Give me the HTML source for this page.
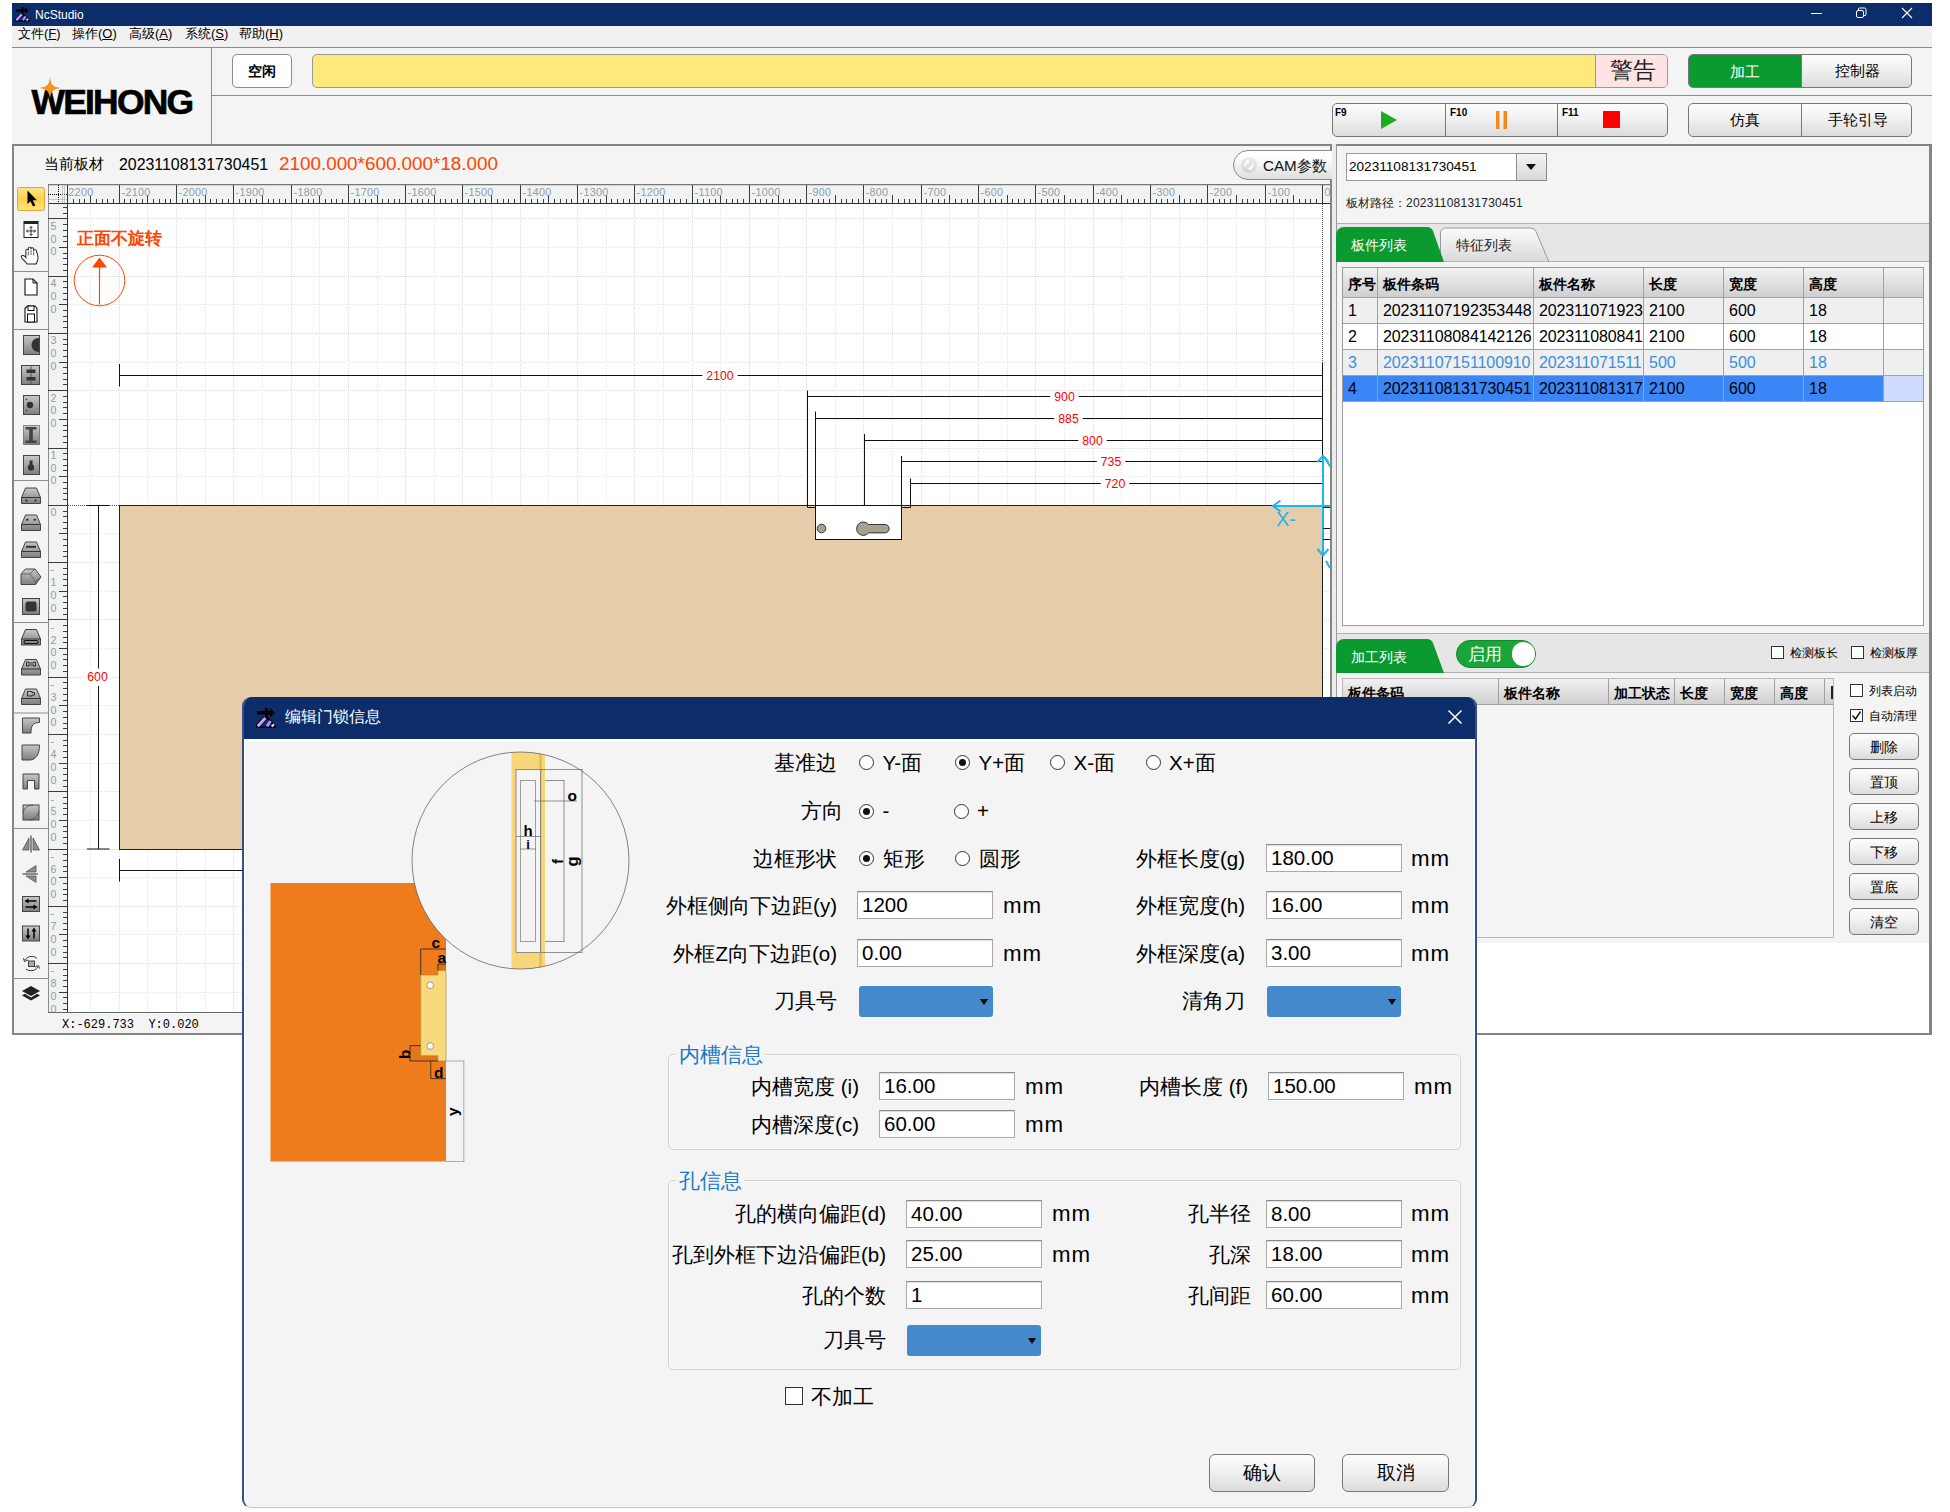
<!DOCTYPE html>
<html><head><meta charset="utf-8"><title>NcStudio</title>
<style>
*{box-sizing:border-box;margin:0;padding:0}
html,body{width:1950px;height:1512px;background:#fff;overflow:hidden}
body{font-family:"Liberation Sans",sans-serif;color:#000;position:relative;font-size:13px}
.a{position:absolute}
.t{position:absolute;white-space:nowrap;line-height:1}
.btn{position:absolute;border:1px solid #787878;border-radius:5px;background:linear-gradient(#fdfdfd,#f1f1f1 45%,#dcdcdc);text-align:center;white-space:nowrap}
.inp{position:absolute;background:#fff;border:1px solid #a9a9a9;border-top-color:#8a8a8a;box-shadow:inset 0 1px 1px #ddd;font-size:20.5px;line-height:26px;padding-left:4px;white-space:nowrap;height:28px;width:136px}
.lbl{position:absolute;font-size:20.5px;line-height:28px;height:28px;white-space:nowrap;text-align:right}
.mm{position:absolute;font-size:22.3px;line-height:27px;height:28px;white-space:nowrap;letter-spacing:1px}
.rad{position:absolute;width:15px;height:15px;border:1px solid #333;border-radius:50%;background:#fff}
.rad.on::after{content:"";position:absolute;left:3px;top:3px;width:7px;height:7px;border-radius:50%;background:#111}
.cmb{position:absolute;background:#4489cb;border-radius:3px;height:31px;width:134px}
.cmb::after{content:"";position:absolute;right:5px;top:13px;border:4.5px solid transparent;border-top:6px solid #000;border-bottom:none}
.cb{position:absolute;width:13px;height:13px;border:1px solid #333;background:#fff}
.th{position:absolute;top:0;height:100%;border-right:1px solid #a0a0a0;font-weight:bold;font-size:14px;line-height:32px;padding-left:5px;white-space:nowrap;overflow:hidden}
.td{position:absolute;top:0;height:100%;border-right:1px solid #a0a0a0;font-size:16px;line-height:26px;padding-left:5px;white-space:nowrap;overflow:hidden}
.row{position:absolute;left:0;width:580px;height:26px;border-bottom:1px solid #a0a0a0}
</style></head><body>

<div class="a" style="left:12px;top:3px;width:1920px;height:23px;background:#0c2d69"></div>
<svg class="a" style="left:15px;top:7px" width="14.5" height="14.5" viewBox="0 0 20 20"><path d="M1 3H15V6.5H1zM14 0.300L18.800 4.800 14 9.200z" fill="#000"/><rect x="8.800" y="0" width="3" height="9" fill="#000"/><path d="M10 8.5L19.5 19" stroke="#000" stroke-width="2.200"/><path d="M0 19.200H20" stroke="#000" stroke-width="1.600"/><path d="M0.800 18.800L9 10" stroke="#000" stroke-width="4.400"/><path d="M1.800 18.200L9.300 10" stroke="#c9a0ff" stroke-width="3"/><path d="M11 18.300L14.5 13" stroke="#b78cff" stroke-width="2.800"/><path d="M15.800 18.5L18 16.300" stroke="#e9d5ff" stroke-width="2.200"/></svg>
<div class="t" style="left:35px;top:9px;font-size:12px;color:#fff">NcStudio</div>
<svg class="a" style="left:1800px;top:3px" width="130" height="23" viewBox="0 0 130 23"><path d="M11 10.5h11" stroke="#fff" stroke-width="1"/><rect x="56.5" y="7.5" width="7" height="7" rx="1.5" fill="none" stroke="#fff"/><path d="M58.5 7.5v-1.5a1 1 0 0 1 1-1h5a1.5 1.5 0 0 1 1.5 1.5v5a1 1 0 0 1-1 1h-1.5" fill="none" stroke="#fff"/><path d="M102 5l10 10M112 5l-10 10" stroke="#fff" stroke-width="1.1"/></svg>
<div class="a" style="left:12px;top:26px;width:1920px;height:21px;background:#f1f1f1"></div>
<div class="t" style="left:18px;top:27px;font-size:13px">文件(<u>F</u>)</div>
<div class="t" style="left:72px;top:27px;font-size:13px">操作(<u>O</u>)</div>
<div class="t" style="left:129px;top:27px;font-size:13px">高级(<u>A</u>)</div>
<div class="t" style="left:185px;top:27px;font-size:13px">系统(<u>S</u>)</div>
<div class="t" style="left:239px;top:27px;font-size:13px">帮助(<u>H</u>)</div>
<div class="a" style="left:12px;top:47px;width:1920px;height:98px;background:#f4f4f4;border-top:1px solid #8c8c8c"></div>
<div class="a" style="left:211px;top:48px;width:1px;height:96px;background:#8c8c8c"></div>
<div class="a" style="left:212px;top:95px;width:1720px;height:1px;background:#8c8c8c"></div>
<div class="t" style="left:31.5px;top:84.5px;font-size:35.4px;font-weight:bold;letter-spacing:-1.75px;color:#000;-webkit-text-stroke:0.7px #000">WEIHONG</div>
<svg class="a" style="left:38.3px;top:76px" width="24" height="24" viewBox="-12 -12 24 24"><path d="M0-11C1-3 3-1 11 0 3 1 1 3 0 11-1 3-3 1-11 0-3-1-1-3 0-11z" fill="#f7941d"/></svg>
<div class="a" style="left:232px;top:54px;width:60px;height:34px;background:#fff;border:1px solid #8c8c8c;border-radius:5px;text-align:center;line-height:32px;font-size:14px;font-weight:bold">空闲</div>
<div class="a" style="left:312px;top:54px;width:1356px;height:34px;background:#ffe87c;border:1px solid #9a9a9a;border-radius:5px;overflow:hidden"><div class="a" style="left:1282px;top:0;width:74px;height:32px;background:#fde3e3;border-left:1px solid #9a9a9a;text-align:center;font-size:23px;line-height:31px;color:#222">警告</div></div>
<div class="btn" style="left:1688px;top:54px;width:224px;height:34px;overflow:hidden">
<div class="a" style="left:0.0px;top:-1px;width:112.0px;height:34px;background:#0b9a2f;color:#fff;font-size:15px;line-height:35px">加工</div>
<div class="a" style="left:112.0px;top:-1px;width:112.0px;height:34px;border-left:1px solid #787878;font-size:15px;line-height:33px">控制器</div>
</div>
<div class="btn" style="left:1688px;top:103px;width:224px;height:34px;overflow:hidden">
<div class="a" style="left:0.0px;top:-1px;width:112.0px;height:34px;font-size:15px;line-height:34px">仿真</div>
<div class="a" style="left:112.0px;top:-1px;width:112.0px;height:34px;border-left:1px solid #787878;font-size:15px;line-height:33px">手轮引导</div>
</div>
<div class="btn" style="left:1332px;top:103px;width:336px;height:34px;overflow:hidden">
<div class="a" style="left:0.0px;top:-1px;width:112.0px;height:34px;"><span class="t" style="left:2px;top:5px;font-size:10px;font-weight:bold">F9</span><svg class="a" style="left:47px;top:8px" width="18" height="18"><path d="M1 0L17 9 1 18z" fill="#1cad1c"/></svg></div>
<div class="a" style="left:112.0px;top:-1px;width:112.0px;height:34px;border-left:1px solid #787878;"><span class="t" style="left:4px;top:5px;font-size:10px;font-weight:bold">F10</span><svg class="a" style="left:49px;top:8px" width="14" height="18"><path d="M1 0h3.5v18H1zM8.5 0H12v18H8.5z" fill="#f08a1c"/></svg></div>
<div class="a" style="left:224.0px;top:-1px;width:112.0px;height:34px;border-left:1px solid #787878;"><span class="t" style="left:4px;top:5px;font-size:10px;font-weight:bold">F11</span><div class="a" style="left:45px;top:8px;width:17px;height:17px;background:#f00"></div></div>
</div>
<div class="a" style="left:12px;top:144px;width:1320px;height:891px;background:#f4f4f4;border:2px solid #858585"></div>
<div class="t" style="left:44px;top:157px;font-size:14.5px">当前板材</div>
<div class="t" style="left:119px;top:156.5px;font-size:15.9px">20231108131730451</div>
<div class="t" style="left:279px;top:155px;font-size:18.85px;color:#ff4500">2100.000*600.000*18.000</div>
<div class="a" style="left:1233px;top:150px;width:130px;height:30px;border:1px solid #8a8a8a;border-radius:15px;background:linear-gradient(#fff 20%,#dedede);"></div>
<div class="a" style="left:1241px;top:157px;width:16px;height:16px;border-radius:8px;background:linear-gradient(#ececec,#d4d4d4);"></div>
<svg class="a" style="left:1241px;top:157px" width="16" height="16" viewBox="-8 -8 16 16"><path d="M-3.5 1.5A3.800 3.800 0 0 1-0.5-3.600M3.5-1.5A3.800 3.800 0 0 1 0.5 3.600" stroke="#fff" stroke-width="1.800" fill="none"/><path d="M-2.5-5.5L1.200-3.800-2 -1.200zM2.5 5.5L-1.200 3.800 2 1.200z" fill="#fff"/></svg>
<div class="t" style="left:1263px;top:157.5px;font-size:15.2px;color:#111">CAM参数</div>
<svg class="a" style="left:48px;top:184px" width="1282" height="828" viewBox="48 184 1282 828" font-family="Liberation Sans, sans-serif">
<rect x="48" y="184" width="1282" height="828" fill="#fff"/>
<rect x="48" y="184" width="1282" height="20" fill="#f1f3f3"/>
<rect x="48" y="184" width="20" height="828" fill="#f1f3f3"/>
<path d="M90.5 204V1012" stroke="#e5e5e5" stroke-width="1" stroke-dasharray="1 1"/><path d="M119.5 204V1012" stroke="#dedede" stroke-width="1" stroke-dasharray="1 1"/><path d="M147.5 204V1012" stroke="#e5e5e5" stroke-width="1" stroke-dasharray="1 1"/><path d="M176.5 204V1012" stroke="#dedede" stroke-width="1" stroke-dasharray="1 1"/><path d="M205.5 204V1012" stroke="#e5e5e5" stroke-width="1" stroke-dasharray="1 1"/><path d="M233.5 204V1012" stroke="#dedede" stroke-width="1" stroke-dasharray="1 1"/><path d="M262.5 204V1012" stroke="#e5e5e5" stroke-width="1" stroke-dasharray="1 1"/><path d="M291.5 204V1012" stroke="#dedede" stroke-width="1" stroke-dasharray="1 1"/><path d="M319.5 204V1012" stroke="#e5e5e5" stroke-width="1" stroke-dasharray="1 1"/><path d="M348.5 204V1012" stroke="#dedede" stroke-width="1" stroke-dasharray="1 1"/><path d="M377.5 204V1012" stroke="#e5e5e5" stroke-width="1" stroke-dasharray="1 1"/><path d="M405.5 204V1012" stroke="#dedede" stroke-width="1" stroke-dasharray="1 1"/><path d="M434.5 204V1012" stroke="#e5e5e5" stroke-width="1" stroke-dasharray="1 1"/><path d="M462.5 204V1012" stroke="#dedede" stroke-width="1" stroke-dasharray="1 1"/><path d="M491.5 204V1012" stroke="#e5e5e5" stroke-width="1" stroke-dasharray="1 1"/><path d="M520.5 204V1012" stroke="#dedede" stroke-width="1" stroke-dasharray="1 1"/><path d="M548.5 204V1012" stroke="#e5e5e5" stroke-width="1" stroke-dasharray="1 1"/><path d="M577.5 204V1012" stroke="#dedede" stroke-width="1" stroke-dasharray="1 1"/><path d="M606.5 204V1012" stroke="#e5e5e5" stroke-width="1" stroke-dasharray="1 1"/><path d="M634.5 204V1012" stroke="#dedede" stroke-width="1" stroke-dasharray="1 1"/><path d="M663.5 204V1012" stroke="#e5e5e5" stroke-width="1" stroke-dasharray="1 1"/><path d="M692.5 204V1012" stroke="#dedede" stroke-width="1" stroke-dasharray="1 1"/><path d="M720.5 204V1012" stroke="#e5e5e5" stroke-width="1" stroke-dasharray="1 1"/><path d="M749.5 204V1012" stroke="#dedede" stroke-width="1" stroke-dasharray="1 1"/><path d="M778.5 204V1012" stroke="#e5e5e5" stroke-width="1" stroke-dasharray="1 1"/><path d="M806.5 204V1012" stroke="#dedede" stroke-width="1" stroke-dasharray="1 1"/><path d="M835.5 204V1012" stroke="#e5e5e5" stroke-width="1" stroke-dasharray="1 1"/><path d="M863.5 204V1012" stroke="#dedede" stroke-width="1" stroke-dasharray="1 1"/><path d="M892.5 204V1012" stroke="#e5e5e5" stroke-width="1" stroke-dasharray="1 1"/><path d="M921.5 204V1012" stroke="#dedede" stroke-width="1" stroke-dasharray="1 1"/><path d="M949.5 204V1012" stroke="#e5e5e5" stroke-width="1" stroke-dasharray="1 1"/><path d="M978.5 204V1012" stroke="#dedede" stroke-width="1" stroke-dasharray="1 1"/><path d="M1007.5 204V1012" stroke="#e5e5e5" stroke-width="1" stroke-dasharray="1 1"/><path d="M1035.5 204V1012" stroke="#dedede" stroke-width="1" stroke-dasharray="1 1"/><path d="M1064.5 204V1012" stroke="#e5e5e5" stroke-width="1" stroke-dasharray="1 1"/><path d="M1093.5 204V1012" stroke="#dedede" stroke-width="1" stroke-dasharray="1 1"/><path d="M1121.5 204V1012" stroke="#e5e5e5" stroke-width="1" stroke-dasharray="1 1"/><path d="M1150.5 204V1012" stroke="#dedede" stroke-width="1" stroke-dasharray="1 1"/><path d="M1179.5 204V1012" stroke="#e5e5e5" stroke-width="1" stroke-dasharray="1 1"/><path d="M1207.5 204V1012" stroke="#dedede" stroke-width="1" stroke-dasharray="1 1"/><path d="M1236.5 204V1012" stroke="#e5e5e5" stroke-width="1" stroke-dasharray="1 1"/><path d="M1265.5 204V1012" stroke="#dedede" stroke-width="1" stroke-dasharray="1 1"/><path d="M1293.5 204V1012" stroke="#e5e5e5" stroke-width="1" stroke-dasharray="1 1"/><path d="M1322.5 204V1012" stroke="#dedede" stroke-width="1" stroke-dasharray="1 1"/><path d="M68 992.5H1330" stroke="#e5e5e5" stroke-width="1" stroke-dasharray="1 1"/><path d="M68 963.5H1330" stroke="#dedede" stroke-width="1" stroke-dasharray="1 1"/><path d="M68 934.5H1330" stroke="#e5e5e5" stroke-width="1" stroke-dasharray="1 1"/><path d="M68 906.5H1330" stroke="#dedede" stroke-width="1" stroke-dasharray="1 1"/><path d="M68 877.5H1330" stroke="#e5e5e5" stroke-width="1" stroke-dasharray="1 1"/><path d="M68 849.5H1330" stroke="#dedede" stroke-width="1" stroke-dasharray="1 1"/><path d="M68 820.5H1330" stroke="#e5e5e5" stroke-width="1" stroke-dasharray="1 1"/><path d="M68 791.5H1330" stroke="#dedede" stroke-width="1" stroke-dasharray="1 1"/><path d="M68 763.5H1330" stroke="#e5e5e5" stroke-width="1" stroke-dasharray="1 1"/><path d="M68 734.5H1330" stroke="#dedede" stroke-width="1" stroke-dasharray="1 1"/><path d="M68 705.5H1330" stroke="#e5e5e5" stroke-width="1" stroke-dasharray="1 1"/><path d="M68 677.5H1330" stroke="#dedede" stroke-width="1" stroke-dasharray="1 1"/><path d="M68 648.5H1330" stroke="#e5e5e5" stroke-width="1" stroke-dasharray="1 1"/><path d="M68 619.5H1330" stroke="#dedede" stroke-width="1" stroke-dasharray="1 1"/><path d="M68 591.5H1330" stroke="#e5e5e5" stroke-width="1" stroke-dasharray="1 1"/><path d="M68 562.5H1330" stroke="#dedede" stroke-width="1" stroke-dasharray="1 1"/><path d="M68 533.5H1330" stroke="#e5e5e5" stroke-width="1" stroke-dasharray="1 1"/><path d="M68 505.5H1330" stroke="#dedede" stroke-width="1" stroke-dasharray="1 1"/><path d="M68 476.5H1330" stroke="#e5e5e5" stroke-width="1" stroke-dasharray="1 1"/><path d="M68 448.5H1330" stroke="#dedede" stroke-width="1" stroke-dasharray="1 1"/><path d="M68 419.5H1330" stroke="#e5e5e5" stroke-width="1" stroke-dasharray="1 1"/><path d="M68 390.5H1330" stroke="#dedede" stroke-width="1" stroke-dasharray="1 1"/><path d="M68 362.5H1330" stroke="#e5e5e5" stroke-width="1" stroke-dasharray="1 1"/><path d="M68 333.5H1330" stroke="#dedede" stroke-width="1" stroke-dasharray="1 1"/><path d="M68 304.5H1330" stroke="#e5e5e5" stroke-width="1" stroke-dasharray="1 1"/><path d="M68 276.5H1330" stroke="#dedede" stroke-width="1" stroke-dasharray="1 1"/><path d="M68 247.5H1330" stroke="#e5e5e5" stroke-width="1" stroke-dasharray="1 1"/><path d="M68 218.5H1330" stroke="#dedede" stroke-width="1" stroke-dasharray="1 1"/>
<rect x="119.5" y="505.5" width="1203" height="344" fill="#e6cda9" stroke="#222" stroke-width="1"/>
<path d="M73.5 199V203M79.5 199V203M84.5 199V203M90.5 195V203M96.5 199V203M102.5 199V203M107.5 199V203M113.5 199V203M119.5 185V203M124.5 199V203M130.5 199V203M136.5 199V203M142.5 199V203M147.5 195V203M153.5 199V203M159.5 199V203M165.5 199V203M170.5 199V203M176.5 185V203M182.5 199V203M187.5 199V203M193.5 199V203M199.5 199V203M205.5 195V203M210.5 199V203M216.5 199V203M222.5 199V203M228.5 199V203M233.5 185V203M239.5 199V203M245.5 199V203M250.5 199V203M256.5 199V203M262.5 195V203M268.5 199V203M273.5 199V203M279.5 199V203M285.5 199V203M291.5 185V203M296.5 199V203M302.5 199V203M308.5 199V203M313.5 199V203M319.5 195V203M325.5 199V203M331.5 199V203M336.5 199V203M342.5 199V203M348.5 185V203M354.5 199V203M359.5 199V203M365.5 199V203M371.5 199V203M377.5 195V203M382.5 199V203M388.5 199V203M394.5 199V203M399.5 199V203M405.5 185V203M411.5 199V203M417.5 199V203M422.5 199V203M428.5 199V203M434.5 195V203M440.5 199V203M445.5 199V203M451.5 199V203M457.5 199V203M462.5 185V203M468.5 199V203M474.5 199V203M480.5 199V203M485.5 199V203M491.5 195V203M497.5 199V203M503.5 199V203M508.5 199V203M514.5 199V203M520.5 185V203M525.5 199V203M531.5 199V203M537.5 199V203M543.5 199V203M548.5 195V203M554.5 199V203M560.5 199V203M566.5 199V203M571.5 199V203M577.5 185V203M583.5 199V203M588.5 199V203M594.5 199V203M600.5 199V203M606.5 195V203M611.5 199V203M617.5 199V203M623.5 199V203M629.5 199V203M634.5 185V203M640.5 199V203M646.5 199V203M652.5 199V203M657.5 199V203M663.5 195V203M669.5 199V203M674.5 199V203M680.5 199V203M686.5 199V203M692.5 185V203M697.5 199V203M703.5 199V203M709.5 199V203M715.5 199V203M720.5 195V203M726.5 199V203M732.5 199V203M737.5 199V203M743.5 199V203M749.5 185V203M755.5 199V203M760.5 199V203M766.5 199V203M772.5 199V203M778.5 195V203M783.5 199V203M789.5 199V203M795.5 199V203M800.5 199V203M806.5 185V203M812.5 199V203M818.5 199V203M823.5 199V203M829.5 199V203M835.5 195V203M841.5 199V203M846.5 199V203M852.5 199V203M858.5 199V203M863.5 185V203M869.5 199V203M875.5 199V203M881.5 199V203M886.5 199V203M892.5 195V203M898.5 199V203M904.5 199V203M909.5 199V203M915.5 199V203M921.5 185V203M926.5 199V203M932.5 199V203M938.5 199V203M944.5 199V203M949.5 195V203M955.5 199V203M961.5 199V203M967.5 199V203M972.5 199V203M978.5 185V203M984.5 199V203M990.5 199V203M995.5 199V203M1001.5 199V203M1007.5 195V203M1012.5 199V203M1018.5 199V203M1024.5 199V203M1030.5 199V203M1035.5 185V203M1041.5 199V203M1047.5 199V203M1053.5 199V203M1058.5 199V203M1064.5 195V203M1070.5 199V203M1075.5 199V203M1081.5 199V203M1087.5 199V203M1093.5 185V203M1098.5 199V203M1104.5 199V203M1110.5 199V203M1116.5 199V203M1121.5 195V203M1127.5 199V203M1133.5 199V203M1138.5 199V203M1144.5 199V203M1150.5 185V203M1156.5 199V203M1161.5 199V203M1167.5 199V203M1173.5 199V203M1179.5 195V203M1184.5 199V203M1190.5 199V203M1196.5 199V203M1201.5 199V203M1207.5 185V203M1213.5 199V203M1219.5 199V203M1224.5 199V203M1230.5 199V203M1236.5 195V203M1242.5 199V203M1247.5 199V203M1253.5 199V203M1259.5 199V203M1265.5 185V203M1270.5 199V203M1276.5 199V203M1282.5 199V203M1287.5 199V203M1293.5 195V203M1299.5 199V203M1305.5 199V203M1310.5 199V203M1316.5 199V203M1322.5 185V203" stroke="#3c3c3c" stroke-width="1"/>
<path d="M48 203.5H1330" stroke="#333" stroke-width="1"/>
<path d="M48 184.5H1330" stroke="#777" stroke-width="1.5"/><path d="M48.5 185V1012" stroke="#8a8a8a" stroke-width="1"/>
<text x="68.3" y="196" font-size="10.800" letter-spacing="0.3" fill="#929aa8">2200</text>
<text x="121.5" y="196" font-size="10.800" letter-spacing="0.3" fill="#929aa8">-2100</text>
<text x="178.5" y="196" font-size="10.800" letter-spacing="0.3" fill="#929aa8">-2000</text>
<text x="235.5" y="196" font-size="10.800" letter-spacing="0.3" fill="#929aa8">-1900</text>
<text x="293.5" y="196" font-size="10.800" letter-spacing="0.3" fill="#929aa8">-1800</text>
<text x="350.5" y="196" font-size="10.800" letter-spacing="0.3" fill="#929aa8">-1700</text>
<text x="407.5" y="196" font-size="10.800" letter-spacing="0.3" fill="#929aa8">-1600</text>
<text x="464.5" y="196" font-size="10.800" letter-spacing="0.3" fill="#929aa8">-1500</text>
<text x="522.5" y="196" font-size="10.800" letter-spacing="0.3" fill="#929aa8">-1400</text>
<text x="579.5" y="196" font-size="10.800" letter-spacing="0.3" fill="#929aa8">-1300</text>
<text x="636.5" y="196" font-size="10.800" letter-spacing="0.3" fill="#929aa8">-1200</text>
<text x="694.5" y="196" font-size="10.800" letter-spacing="0.3" fill="#929aa8">-1100</text>
<text x="751.5" y="196" font-size="10.800" letter-spacing="0.3" fill="#929aa8">-1000</text>
<text x="808.5" y="196" font-size="10.800" letter-spacing="0.3" fill="#929aa8">-900</text>
<text x="865.5" y="196" font-size="10.800" letter-spacing="0.3" fill="#929aa8">-800</text>
<text x="923.5" y="196" font-size="10.800" letter-spacing="0.3" fill="#929aa8">-700</text>
<text x="980.5" y="196" font-size="10.800" letter-spacing="0.3" fill="#929aa8">-600</text>
<text x="1037.5" y="196" font-size="10.800" letter-spacing="0.3" fill="#929aa8">-500</text>
<text x="1095.5" y="196" font-size="10.800" letter-spacing="0.3" fill="#929aa8">-400</text>
<text x="1152.5" y="196" font-size="10.800" letter-spacing="0.3" fill="#929aa8">-300</text>
<text x="1209.5" y="196" font-size="10.800" letter-spacing="0.3" fill="#929aa8">-200</text>
<text x="1267.5" y="196" font-size="10.800" letter-spacing="0.3" fill="#929aa8">-100</text>
<text x="1324.5" y="196" font-size="10.800" letter-spacing="0.3" fill="#929aa8">0</text>
<path d="M63 1009.5H67M63 1003.5H67M63 997.5H67M59 992.5H67M63 986.5H67M63 980.5H67M63 975.5H67M63 969.5H67M48 963.5H67M63 957.5H67M63 952.5H67M63 946.5H67M63 940.5H67M59 934.5H67M63 929.5H67M63 923.5H67M63 917.5H67M63 912.5H67M48 906.5H67M63 900.5H67M63 894.5H67M63 889.5H67M63 883.5H67M59 877.5H67M63 871.5H67M63 866.5H67M63 860.5H67M63 854.5H67M48 849.5H67M63 843.5H67M63 837.5H67M63 831.5H67M63 826.5H67M59 820.5H67M63 814.5H67M63 808.5H67M63 803.5H67M63 797.5H67M48 791.5H67M63 786.5H67M63 780.5H67M63 774.5H67M63 768.5H67M59 763.5H67M63 757.5H67M63 751.5H67M63 745.5H67M63 740.5H67M48 734.5H67M63 728.5H67M63 723.5H67M63 717.5H67M63 711.5H67M59 705.5H67M63 700.5H67M63 694.5H67M63 688.5H67M63 682.5H67M48 677.5H67M63 671.5H67M63 665.5H67M63 659.5H67M63 654.5H67M59 648.5H67M63 642.5H67M63 637.5H67M63 631.5H67M63 625.5H67M48 619.5H67M63 614.5H67M63 608.5H67M63 602.5H67M63 596.5H67M59 591.5H67M63 585.5H67M63 579.5H67M63 574.5H67M63 568.5H67M48 562.5H67M63 556.5H67M63 551.5H67M63 545.5H67M63 539.5H67M59 533.5H67M63 528.5H67M63 522.5H67M63 516.5H67M63 511.5H67M48 505.5H67M63 499.5H67M63 493.5H67M63 488.5H67M63 482.5H67M59 476.5H67M63 470.5H67M63 465.5H67M63 459.5H67M63 453.5H67M48 448.5H67M63 442.5H67M63 436.5H67M63 430.5H67M63 425.5H67M59 419.5H67M63 413.5H67M63 407.5H67M63 402.5H67M63 396.5H67M48 390.5H67M63 384.5H67M63 379.5H67M63 373.5H67M63 367.5H67M59 362.5H67M63 356.5H67M63 350.5H67M63 344.5H67M63 339.5H67M48 333.5H67M63 327.5H67M63 321.5H67M63 316.5H67M63 310.5H67M59 304.5H67M63 299.5H67M63 293.5H67M63 287.5H67M63 281.5H67M48 276.5H67M63 270.5H67M63 264.5H67M63 258.5H67M63 253.5H67M59 247.5H67M63 241.5H67M63 236.5H67M63 230.5H67M63 224.5H67M48 218.5H67M63 213.5H67M63 207.5H67" stroke="#3c3c3c" stroke-width="1"/>
<path d="M67.5 185V1012" stroke="#333" stroke-width="1"/>
<text x="50.5" y="974.4" font-size="10.600" fill="#929aa8">-</text>
<text x="50.5" y="987.2" font-size="10.600" fill="#929aa8">8</text>
<text x="50.5" y="1000.0" font-size="10.600" fill="#929aa8">0</text>
<text x="50.5" y="1012.8" font-size="10.600" fill="#929aa8">0</text>
<text x="50.5" y="917.1" font-size="10.600" fill="#929aa8">-</text>
<text x="50.5" y="929.9" font-size="10.600" fill="#929aa8">7</text>
<text x="50.5" y="942.7" font-size="10.600" fill="#929aa8">0</text>
<text x="50.5" y="955.5" font-size="10.600" fill="#929aa8">0</text>
<text x="50.5" y="859.8" font-size="10.600" fill="#929aa8">-</text>
<text x="50.5" y="872.6" font-size="10.600" fill="#929aa8">6</text>
<text x="50.5" y="885.4" font-size="10.600" fill="#929aa8">0</text>
<text x="50.5" y="898.2" font-size="10.600" fill="#929aa8">0</text>
<text x="50.5" y="802.5" font-size="10.600" fill="#929aa8">-</text>
<text x="50.5" y="815.3" font-size="10.600" fill="#929aa8">5</text>
<text x="50.5" y="828.1" font-size="10.600" fill="#929aa8">0</text>
<text x="50.5" y="840.9" font-size="10.600" fill="#929aa8">0</text>
<text x="50.5" y="745.3" font-size="10.600" fill="#929aa8">-</text>
<text x="50.5" y="758.1" font-size="10.600" fill="#929aa8">4</text>
<text x="50.5" y="770.9" font-size="10.600" fill="#929aa8">0</text>
<text x="50.5" y="783.7" font-size="10.600" fill="#929aa8">0</text>
<text x="50.5" y="688.0" font-size="10.600" fill="#929aa8">-</text>
<text x="50.5" y="700.8" font-size="10.600" fill="#929aa8">3</text>
<text x="50.5" y="713.6" font-size="10.600" fill="#929aa8">0</text>
<text x="50.5" y="726.4" font-size="10.600" fill="#929aa8">0</text>
<text x="50.5" y="630.7" font-size="10.600" fill="#929aa8">-</text>
<text x="50.5" y="643.5" font-size="10.600" fill="#929aa8">2</text>
<text x="50.5" y="656.3" font-size="10.600" fill="#929aa8">0</text>
<text x="50.5" y="669.1" font-size="10.600" fill="#929aa8">0</text>
<text x="50.5" y="573.4" font-size="10.600" fill="#929aa8">-</text>
<text x="50.5" y="586.2" font-size="10.600" fill="#929aa8">1</text>
<text x="50.5" y="599.0" font-size="10.600" fill="#929aa8">0</text>
<text x="50.5" y="611.8" font-size="10.600" fill="#929aa8">0</text>
<text x="50.5" y="516.1" font-size="10.600" fill="#929aa8">0</text>
<text x="50.5" y="458.8" font-size="10.600" fill="#929aa8">1</text>
<text x="50.5" y="471.6" font-size="10.600" fill="#929aa8">0</text>
<text x="50.5" y="484.4" font-size="10.600" fill="#929aa8">0</text>
<text x="50.5" y="401.5" font-size="10.600" fill="#929aa8">2</text>
<text x="50.5" y="414.3" font-size="10.600" fill="#929aa8">0</text>
<text x="50.5" y="427.1" font-size="10.600" fill="#929aa8">0</text>
<text x="50.5" y="344.2" font-size="10.600" fill="#929aa8">3</text>
<text x="50.5" y="357.0" font-size="10.600" fill="#929aa8">0</text>
<text x="50.5" y="369.8" font-size="10.600" fill="#929aa8">0</text>
<text x="50.5" y="286.9" font-size="10.600" fill="#929aa8">4</text>
<text x="50.5" y="299.7" font-size="10.600" fill="#929aa8">0</text>
<text x="50.5" y="312.5" font-size="10.600" fill="#929aa8">0</text>
<text x="50.5" y="229.7" font-size="10.600" fill="#929aa8">5</text>
<text x="50.5" y="242.5" font-size="10.600" fill="#929aa8">0</text>
<text x="50.5" y="255.3" font-size="10.600" fill="#929aa8">0</text>
<rect x="49" y="186" width="18" height="17" fill="#f1f3f3"/><path d="M48 194.5H67M58.5 185V203" stroke="#000" stroke-width="1" stroke-dasharray="1 1"/><path d="M62.5 185V203M64.5 185V203M48 199.5H67" stroke="#aaa" stroke-width="0.6"/>
<path d="M119.5 375.5H702.4M737.6 375.5H1322.5" stroke="#111" stroke-width="1"/>
<text x="720.0" y="379.5" font-size="12.3" fill="#f00" text-anchor="middle">2100</text>
<path d="M119.5 364V386.5M1322.5 363V505" stroke="#111" stroke-width="1"/>
<path d="M1322.5 204V363" stroke="#555" stroke-width="1" stroke-dasharray="1 1"/>
<path d="M807.5 396.5H1050.3M1078.7 396.5H1322.5" stroke="#111" stroke-width="1"/>
<text x="1064.5" y="400.5" font-size="12.3" fill="#f00" text-anchor="middle">900</text>
<path d="M815.5 418.5H1054.3M1082.7 418.5H1322.5" stroke="#111" stroke-width="1"/>
<text x="1068.5" y="422.5" font-size="12.3" fill="#f00" text-anchor="middle">885</text>
<path d="M864.5 440.5H1078.3M1106.7 440.5H1322.5" stroke="#111" stroke-width="1"/>
<text x="1092.5" y="444.5" font-size="12.3" fill="#f00" text-anchor="middle">800</text>
<path d="M901.5 461.5H1096.8M1125.2 461.5H1322.5" stroke="#111" stroke-width="1"/>
<text x="1111.0" y="465.5" font-size="12.3" fill="#f00" text-anchor="middle">735</text>
<path d="M910.5 483.5H1100.8M1129.2 483.5H1322.5" stroke="#111" stroke-width="1"/>
<text x="1115.0" y="487.5" font-size="12.3" fill="#f00" text-anchor="middle">720</text>
<path d="M807.5 390.5V507.5H815.5M815.5 411.5V505M864.5 434V505M901.5 456V507.5H910.5V478.5" stroke="#111" stroke-width="1" fill="none"/>
<rect x="815.5" y="505.5" width="86" height="34" fill="#fff" stroke="#111" stroke-width="1"/>
<circle cx="821.5" cy="528.5" r="4.3" fill="#a8a092" stroke="#111" stroke-width="0.8"/>
<path d="M868.5 524.5H885a4.2 4.2 0 0 1 0 8.4H868.5A6.7 6.7 0 1 1 868.5 524.5z" fill="#a8a092" stroke="#111" stroke-width="0.8"/>
<path d="M98.5 505.5V849M87 505.5H109.5M87 849H109.5" stroke="#111" stroke-width="1"/>
<path d="M68 505.5H87M110 505.5H119" stroke="#555" stroke-width="1" stroke-dasharray="1 1"/>
<rect x="86" y="668.5" width="24" height="17.5" fill="#fff"/>
<text x="97.5" y="681" font-size="12.3" fill="#f00" text-anchor="middle">600</text>
<path d="M119.5 859V881.5M119.5 870.5H260" stroke="#111" stroke-width="1"/>
<circle cx="99.5" cy="280.5" r="25.3" fill="none" stroke="#ff4500" stroke-width="1"/>
<path d="M99.5 259V304.5" stroke="#ff4500" stroke-width="1.2"/><path d="M99.5 257.5L107 267.5H92z" fill="#ff4500"/>
<text x="77" y="244" font-size="16.8" font-weight="bold" fill="#ff4500" font-family="Liberation Serif, serif">正面不旋转</text>
<path d="M1323 456.5V555M1273 506H1330" stroke="#1eb4ee" stroke-width="2"/>
<path d="M1317.5 462L1323 456 1328.5 462M1317.5 549L1323 555.5 1328.5 549M1280.5 500.5L1273 506 1280.5 511.5" stroke="#1eb4ee" stroke-width="2" fill="none"/>
<text x="1276" y="526" font-size="20" fill="#1eb4ee">X-</text>
<path d="M1323 507.5H1330M1323 528.5H1330M1323 539.5H1330" stroke="#111" stroke-width="1"/>
<path d="M1326 561l4 7M1325 457.5l5 9" stroke="#1eb4ee" stroke-width="2"/>
</svg>
<div class="a" style="left:48px;top:1012px;width:1282px;height:1px;background:#666"></div>
<div class="t" style="left:62px;top:1019px;font-family:'Liberation Mono',monospace;font-size:12px;white-space:pre">X:-629.733  Y:0.020</div>
<svg class="a" style="left:14px;top:185px" width="34" height="848" viewBox="14 185 34 848">
<defs><linearGradient id="gg" x1="0" y1="0" x2="0" y2="1"><stop offset="0" stop-color="#c8c8c8"/><stop offset="1" stop-color="#7e7e7e"/></linearGradient><linearGradient id="gy" x1="0" y1="0" x2="0" y2="1"><stop offset="0" stop-color="#ffe58a"/><stop offset="0.5" stop-color="#fdd04e"/><stop offset="1" stop-color="#ffe27a"/></linearGradient></defs>
<rect x="17.5" y="187.5" width="27" height="23" rx="2" fill="url(#gy)" stroke="#d9a93a"/>
<g transform="translate(31 199)"><path d="M-3.5-8.5V5L-0.5 2.2 2 7.5 4.3 6.4 1.8 1.3H6z" fill="#000"/></g>
<g transform="translate(31 229.5)"><rect x="-7" y="-8" width="14" height="16" fill="#fff" stroke="#222"/><rect x="-7" y="-8" width="14" height="2.5" fill="#222"/><path d="M-4.5 1.5H4.5M0-3V6M-1.5-1.5L0-3 1.5-1.5M-1.5 4.5L0 6 1.5 4.5M-3 0L-4.5 1.5-3 3M3 0L4.5 1.5 3 3" stroke="#222" stroke-width="0.9" fill="none"/></g>
<g transform="translate(31 255.5)"><path transform="scale(1.120 1)" d="M-3.5 8.5C-5 5.5-8.800 3.200-8.800 1C-8.300-0.800-6-0.200-4.600 2V-5C-4.600-6.800-2.400-6.800-2.400-5V-7C-2.400-8.900 0-8.900 0-7V-6.300C0-8.200 2.400-8.200 2.400-6.300V-4.600C2.600-6.400 4.900-6.200 4.900-4.400C5.300-2 6.5 0 6.200 3C6 5.5 5 7 4.600 8.5z" fill="#fff" stroke="#222" stroke-width="0.900"/><path d="M-2.700-4V0M0-5.5V-0.5M2.700-4V0" stroke="#222" stroke-width="0.700" fill="none"/></g>
<path d="M14 271.5H48" stroke="#8c8c8c" stroke-width="1"/>
<g transform="translate(31 287)"><path d="M-6-8H2L6-4V8H-6z" fill="#fff" stroke="#111" stroke-width="1.1"/><path d="M2-8V-4H6" fill="none" stroke="#111" stroke-width="1"/></g>
<g transform="translate(31 314)"><path d="M-6-5.5L-3.5-8H4L6-5.5V8H-6z" fill="#fff" stroke="#111" stroke-width="1.1"/><rect x="-3" y="-8" width="6" height="4.5" fill="#fff" stroke="#111" stroke-width="1"/><rect x="-3.5" y="0" width="7" height="8" fill="#fff" stroke="#111" stroke-width="1"/></g>
<path d="M14 329.5H48" stroke="#8c8c8c" stroke-width="1"/>
<g transform="translate(31 345)"><rect x="-7.5" y="-9.5" width="16" height="19" fill="url(#gg)" stroke="#444" stroke-width="1"/><path d="M8-7C-2-7-2 7 8 7z" fill="#333"/></g>
<g transform="translate(31 375)"><rect x="-9.5" y="-9.5" width="18" height="19" fill="url(#gg)" stroke="#444" stroke-width="1"/><path d="M0-9.5V9.5" stroke="#555"/><rect x="-4.5" y="-5.5" width="9" height="3.5" fill="#333"/><rect x="-4.5" y="2" width="9" height="3.5" fill="#333"/></g>
<g transform="translate(31 405)"><rect x="-7.5" y="-9.5" width="16" height="19" fill="url(#gg)" stroke="#444" stroke-width="1"/><circle cx="-1" cy="0" r="3.2" fill="#333"/><circle cx="-4.5" cy="-5.5" r="0.8" fill="#333"/><circle cx="-4.5" cy="5.5" r="0.8" fill="#333"/></g>
<g transform="translate(31 435)"><rect x="-7.5" y="-9.5" width="16" height="19" fill="url(#gg)" stroke="#333" stroke-dasharray="1 1"/><path d="M-5.5-8H5.5V-5.5H1.8V5.5H5.5V8H-5.5V5.5H-1.8V-5.5H-5.5z" fill="#444"/></g>
<g transform="translate(31 465)"><rect x="-7.5" y="-9.5" width="16" height="19" fill="url(#gg)" stroke="#444" stroke-width="1"/><circle cx="0" cy="2.5" r="3.2" fill="#333"/><rect x="-1.5" y="-4.5" width="3" height="5" fill="#333"/></g>
<path d="M14 480.5H48" stroke="#8c8c8c" stroke-width="1"/>
<g transform="translate(31 496)"><path d="M-5.5-8H5.5L9.5 1.5V7.5H-9.5V1.5z" fill="url(#gg)" stroke="#444" stroke-width="1"/><path d="M-9.5 1.5H9.5" stroke="#333" stroke-width="1"/><circle cx="-4.5" cy="4.5" r="1" fill="#222"/><circle cx="4.5" cy="4.5" r="1" fill="#222"/></g>
<g transform="translate(31 523)"><path d="M-5.5-8H5.5L9.5 1.5V7.5H-9.5V1.5z" fill="url(#gg)" stroke="#444" stroke-width="1"/><path d="M-9.5 1.5H9.5" stroke="#333" stroke-width="1"/><rect x="-5" y="-4.2" width="2.5" height="1.8" fill="#333"/><rect x="2.5" y="-4.2" width="2.5" height="1.8" fill="#333"/></g>
<g transform="translate(31 550)"><path d="M-5.5-8H5.5L9.5 1.5V7.5H-9.5V1.5z" fill="url(#gg)" stroke="#444" stroke-width="1"/><path d="M-9.5 1.5H9.5" stroke="#333" stroke-width="1"/><rect x="-5" y="-4.2" width="10" height="2" fill="#333"/></g>
<g transform="translate(31 577)"><path d="M-10-3L-5.5-8H4L10 0 4.5 7.5H-10z" fill="url(#gg)" stroke="#444" stroke-width="1"/><path d="M-10-3H-1L4.5 4.5V7.5M4.5 4.5L10 0M-1-3L4-8" stroke="#555" stroke-width="0.8" fill="none"/></g>
<g transform="translate(31 606.5)"><rect x="-8.5" y="-8" width="17" height="16" fill="url(#gg)" stroke="#444" stroke-width="1"/><rect x="-5.5" y="-5" width="11" height="10" rx="2" fill="#333"/></g>
<path d="M14 622.5H48" stroke="#8c8c8c" stroke-width="1"/>
<g transform="translate(31 637.5)"><path d="M-5.5-8H5.5L9.5 1.5V7.5H-9.5V1.5z" fill="url(#gg)" stroke="#444" stroke-width="1"/><path d="M-9.5 1.5H9.5" stroke="#333" stroke-width="1"/><rect x="-7" y="3" width="14" height="3" rx="1.5" fill="none" stroke="#111" stroke-width="1.2"/></g>
<g transform="translate(31 667.5)"><path d="M-5.5-8H5.5L9.5 1.5V7.5H-9.5V1.5z" fill="url(#gg)" stroke="#444" stroke-width="1"/><path d="M-9.5 1.5H9.5" stroke="#333" stroke-width="1"/><path d="M-4.5-5.5H-2.5V-4.5H2.5V-5.5H4.5V-1.5H2.5V-2.5H-2.5V-1.5H-4.5z" fill="none" stroke="#222" stroke-width="0.9"/></g>
<g transform="translate(31 697)"><path d="M-5.5-8H5.5L9.5 1.5V7.5H-9.5V1.5z" fill="url(#gg)" stroke="#444" stroke-width="1"/><path d="M-9.5 1.5H9.5" stroke="#333" stroke-width="1"/><path d="M-3.5-5.5H1V-4.5H3.5V-2H1V-1H-3.5z" fill="none" stroke="#222" stroke-width="0.9"/></g>
<path d="M14 713H48" stroke="#8c8c8c" stroke-width="1"/>
<g transform="translate(31 725.5)"><path d="M-8.5-7.5H8.5V-3C2-3 0 0 0 7.5H-8.5z" fill="url(#gg)" stroke="#444" stroke-width="1"/></g>
<g transform="translate(31 752.5)"><path d="M-9-7.5H8.5C8.5 3 4 7.5-1 7.5H-9z" fill="url(#gg)" stroke="#444" stroke-width="1"/></g>
<g transform="translate(31 781.5)"><path d="M-8-7.5H8V7.5H3.5V-1H-3.5V7.5H-8z" fill="url(#gg)" stroke="#444" stroke-width="1"/></g>
<g transform="translate(31 812.5)"><rect x="-8" y="-7.5" width="16" height="15" fill="url(#gg)" stroke="#444" stroke-width="1"/><path d="M-8 0C-6-5-3-7.5 2-7.5M8-1C6 4 3 7.5-2 7.5" stroke="#444" stroke-width="0.8" fill="none"/></g>
<path d="M14 828.5H48" stroke="#8c8c8c" stroke-width="1"/>
<g transform="translate(31 844)"><path d="M0-8.5V8.5" stroke="#222" stroke-width="1"/><path d="M-2 6H-8.5L-2-6z" fill="#8c8c8c" stroke="#555" stroke-width="0.8"/><path d="M2 6H8.5L2-6z" fill="#8c8c8c" stroke="#555" stroke-width="0.8"/></g>
<g transform="translate(31 874)"><path d="M-8.5 0H7" stroke="#222" stroke-width="1"/><path d="M5-2V-8.5L-5-2z" fill="#8c8c8c" stroke="#555" stroke-width="0.8"/><path d="M5 2V8.5L-5 2z" fill="#8c8c8c" stroke="#555" stroke-width="0.8"/></g>
<g transform="translate(31 904)"><rect x="-8.5" y="-7.5" width="17" height="15" fill="url(#gg)" stroke="#444" stroke-width="1"/><path d="M-5-3H5.5M-5.5 3H5" stroke="#000" stroke-width="1.5"/><path d="M-2.5-5.5L-6.5-3-2.5-0.5zM2.5 0.5L6.5 3 2.5 5.5z" fill="#000"/></g>
<g transform="translate(31 933.5)"><rect x="-8.5" y="-7.5" width="17" height="15" fill="url(#gg)" stroke="#444" stroke-width="1"/><path d="M-3-5V4.5M3 5V-4.5" stroke="#000" stroke-width="1.5"/><path d="M-5.5 2L-3 6-0.5 2zM0.5-2L3-6 5.5-2z" fill="#000"/></g>
<g transform="translate(31 963.5)"><rect x="-2.5" y="-2.5" width="6" height="5.5" fill="#aaa" stroke="#333" stroke-width="0.9"/><path d="M-6-3.5C-3-8 3-8 6-5M7 3.5C4 8-2 8-5 5.5" stroke="#333" stroke-width="1" fill="none"/><path d="M-7.5-5.5L-6.5-2-3-3.5M8.5 5L7.5 2 4 3.5" stroke="#333" stroke-width="1" fill="none"/></g>
<path d="M14 978.5H48" stroke="#8c8c8c" stroke-width="1"/>
<g transform="translate(31 994.5)"><path d="M0-8.5L9-3.5 0 1.5-9-3.5z" fill="#222"/><path d="M-9 1L-6-0.700 0 3 6-0.700 9 1 0 6z" fill="#222"/></g>
</svg>
<div class="a" style="left:1336px;top:144px;width:596px;height:891px;background:#f4f4f4;border:2px solid #858585;border-left:1px solid #9a9a9a;border-right-width:3px"></div>
<div class="a" style="left:1332px;top:144px;width:4px;height:891px;background:#ececec"></div>
<div class="a" style="left:1337px;top:943px;width:592px;height:90px;background:#fff"></div>
<div class="a" style="left:1346px;top:153px;width:201px;height:28px;background:#fff;border:1px solid #9a9a9a"></div>
<div class="t" style="left:1349px;top:160px;font-size:13.6px">20231108131730451</div>
<div class="a" style="left:1516px;top:153px;width:31px;height:28px;background:linear-gradient(#f4f4f4,#d8d8d8);border:1px solid #8a8a8a"></div>
<div class="a" style="left:1526px;top:164px;border:5px solid transparent;border-top:6px solid #111;border-bottom:none"></div>
<div class="t" style="left:1346px;top:197px;font-size:12px;color:#222">板材路径：<span style="letter-spacing:0.25px">20231108131730451</span></div>
<div class="a" style="left:1337px;top:223px;width:592px;height:39px;background:#e6e6e6;border-top:1px solid #b0b0b0;border-bottom:1px solid #b0b0b0"></div>
<svg class="a" style="left:1336px;top:227px" width="230" height="35" viewBox="0 0 230 35">
<defs><linearGradient id="tg227" x1="0" y1="0" x2="0" y2="1"><stop offset="0" stop-color="#fbfbfb"/><stop offset="1" stop-color="#d9d9d9"/></linearGradient></defs>
<path d="M104.5 35V6a5 5 0 0 1 5-5H195a6 6 0 0 1 5 3.5L213 35z" fill="url(#tg227)" stroke="#999" stroke-width="1"/>
<path d="M0 35V8a8 8 0 0 1 8-8H91a7 7 0 0 1 6 4L108 35z" fill="#0b9a2f"/>
</svg>
<div class="t" style="left:1351px;top:238px;font-size:14px;color:#fff">板件列表</div>
<div class="t" style="left:1456px;top:238px;font-size:14px;color:#222">特征列表</div>
<div class="a" style="left:1342px;top:267px;width:582px;height:359px;background:#fff;border:1px solid #9a9a9a;overflow:hidden">
<div class="row" style="top:0;height:30px;background:linear-gradient(#f2f2f2,#cfcfcf);border-bottom:1px solid #a0a0a0">
<div class="th" style="left:0px;width:35px">序号</div>
<div class="th" style="left:35px;width:156px">板件条码</div>
<div class="th" style="left:191px;width:110px">板件名称</div>
<div class="th" style="left:301px;width:80px">长度</div>
<div class="th" style="left:381px;width:80px">宽度</div>
<div class="th" style="left:461px;width:80px">高度</div>
<div class="th" style="left:541px;width:40px"></div>
</div>
<div class="row" style="top:30px;background:#efefef;color:#000">
<div class="td" style="left:0px;width:35px;">1</div>
<div class="td" style="left:35px;width:156px;letter-spacing:-0.09px;">20231107192353448</div>
<div class="td" style="left:191px;width:110px;letter-spacing:-0.15px;">202311071923</div>
<div class="td" style="left:301px;width:80px;">2100</div>
<div class="td" style="left:381px;width:80px;">600</div>
<div class="td" style="left:461px;width:80px;">18</div>
<div class="td" style="left:541px;width:40px;"></div>
</div>
<div class="row" style="top:56px;background:#fff;color:#000">
<div class="td" style="left:0px;width:35px;">2</div>
<div class="td" style="left:35px;width:156px;letter-spacing:-0.09px;">20231108084142126</div>
<div class="td" style="left:191px;width:110px;letter-spacing:-0.15px;">202311080841</div>
<div class="td" style="left:301px;width:80px;">2100</div>
<div class="td" style="left:381px;width:80px;">600</div>
<div class="td" style="left:461px;width:80px;">18</div>
<div class="td" style="left:541px;width:40px;"></div>
</div>
<div class="row" style="top:82px;background:#efefef;color:#3b8ede">
<div class="td" style="left:0px;width:35px;">3</div>
<div class="td" style="left:35px;width:156px;letter-spacing:-0.09px;">20231107151100910</div>
<div class="td" style="left:191px;width:110px;letter-spacing:-0.15px;">202311071511</div>
<div class="td" style="left:301px;width:80px;">500</div>
<div class="td" style="left:381px;width:80px;">500</div>
<div class="td" style="left:461px;width:80px;">18</div>
<div class="td" style="left:541px;width:40px;"></div>
</div>
<div class="row" style="top:108px;background:#3a86f7;color:#000">
<div class="td" style="left:0px;width:35px;">4</div>
<div class="td" style="left:35px;width:156px;letter-spacing:-0.09px;">20231108131730451</div>
<div class="td" style="left:191px;width:110px;letter-spacing:-0.15px;">202311081317</div>
<div class="td" style="left:301px;width:80px;">2100</div>
<div class="td" style="left:381px;width:80px;">600</div>
<div class="td" style="left:461px;width:80px;">18</div>
<div class="td" style="left:541px;width:40px;background:#cfdcff;"></div>
</div>
</div>
<div class="a" style="left:1337px;top:633px;width:592px;height:40px;background:#e6e6e6;border-top:1px solid #b0b0b0;border-bottom:1px solid #b0b0b0"></div>
<svg class="a" style="left:1336px;top:639px" width="230" height="34" viewBox="0 0 230 34">
<defs><linearGradient id="tg639" x1="0" y1="0" x2="0" y2="1"><stop offset="0" stop-color="#fbfbfb"/><stop offset="1" stop-color="#d9d9d9"/></linearGradient></defs>
<path d="M0 34V8a8 8 0 0 1 8-8H91a7 7 0 0 1 6 4L108 34z" fill="#0b9a2f"/>
</svg>
<div class="t" style="left:1351px;top:650px;font-size:14px;color:#fff">加工列表</div>
<div class="a" style="left:1456px;top:640px;width:80px;height:28px;border-radius:14px;background:#1aa53a;border:1px solid #0d8a2a"></div>
<div class="t" style="left:1468px;top:646px;font-size:16.5px;color:#fff">启用</div>
<div class="a" style="left:1512px;top:642px;width:23px;height:24px;border-radius:12px;background:#fff"></div>
<div class="cb" style="left:1771px;top:646px"></div><div class="t" style="left:1790px;top:647px;font-size:12px">检测板长</div>
<div class="cb" style="left:1851px;top:646px"></div><div class="t" style="left:1870px;top:647px;font-size:12px">检测板厚</div>
<div class="a" style="left:1342px;top:678px;width:492px;height:260px;background:#f4f4f4;border:1px solid #b8b8b8;overflow:hidden">
<div class="row" style="top:0;width:492px;height:26px;background:linear-gradient(#f2f2f2,#cfcfcf);border-bottom:1px solid #a0a0a0">
<div class="th" style="left:0px;width:156px;line-height:28px">板件条码</div>
<div class="th" style="left:156px;width:110px;line-height:28px">板件名称</div>
<div class="th" style="left:266px;width:66px;line-height:28px">加工状态</div>
<div class="th" style="left:332px;width:50px;line-height:28px">长度</div>
<div class="th" style="left:382px;width:50px;line-height:28px">宽度</div>
<div class="th" style="left:432px;width:50px;line-height:28px">高度</div>
<div class="th" style="left:482px;width:10px;line-height:28px"></div>
</div></div>
<div class="a" style="left:1831px;top:686px;width:2px;height:13px;background:#222"></div>
<div class="cb" style="left:1850px;top:684px"></div><div class="t" style="left:1869px;top:685px;font-size:12px">列表启动</div>
<div class="cb" style="left:1850px;top:709px"></div><div class="t" style="left:1869px;top:710px;font-size:12px">自动清理</div>
<svg class="a" style="left:1850px;top:709px" width="13" height="13"><path d="M2.5 6.5L5.5 10 10.5 2.5" stroke="#111" stroke-width="1.400" fill="none"/></svg>
<div class="btn" style="left:1849px;top:733px;width:70px;height:27px;font-size:14px;line-height:26px">删除</div>
<div class="btn" style="left:1849px;top:768px;width:70px;height:27px;font-size:14px;line-height:26px">置顶</div>
<div class="btn" style="left:1849px;top:803px;width:70px;height:27px;font-size:14px;line-height:26px">上移</div>
<div class="btn" style="left:1849px;top:838px;width:70px;height:27px;font-size:14px;line-height:26px">下移</div>
<div class="btn" style="left:1849px;top:873px;width:70px;height:27px;font-size:14px;line-height:26px">置底</div>
<div class="btn" style="left:1849px;top:908px;width:70px;height:27px;font-size:14px;line-height:26px">清空</div>
<div class="a" style="left:242px;top:697px;width:1235px;height:811px;background:#f4f4f4;border:2px solid #34508c;border-top:none;border-bottom:1px solid #c4c4c4;border-radius:9px 9px 9px 9px;overflow:hidden;box-shadow:inset 1px 0 #fff,inset -1px 0 #fff">
<div class="a" style="left:-2px;top:0;width:1237px;height:42px;background:#0c2d69"></div><div class="a" style="left:0;top:42px;width:1233px;height:2px;background:#fff"></div>
</div>
<svg class="a" style="left:256px;top:708px" width="20" height="20" viewBox="0 0 20 20"><path d="M1 3H15V6.5H1zM14 0.300L18.800 4.800 14 9.200z" fill="#000"/><rect x="8.800" y="0" width="3" height="9" fill="#000"/><path d="M10 8.5L19.5 19" stroke="#000" stroke-width="2.200"/><path d="M0 19.200H20" stroke="#000" stroke-width="1.600"/><path d="M0.800 18.800L9 10" stroke="#000" stroke-width="4.400"/><path d="M1.800 18.200L9.300 10" stroke="#c9a0ff" stroke-width="3"/><path d="M11 18.300L14.5 13" stroke="#b78cff" stroke-width="2.800"/><path d="M15.800 18.5L18 16.300" stroke="#e9d5ff" stroke-width="2.200"/></svg>
<div class="t" style="left:285px;top:708px;font-size:16.300px;color:#fff">编辑门锁信息</div>
<svg class="a" style="left:1447px;top:709px" width="16" height="16"><path d="M1.5 1.5l13 13M14.5 1.5l-13 13" stroke="#fff" stroke-width="1.5"/></svg>
<svg class="a" style="left:255px;top:745px" width="400" height="430" viewBox="255 745 400 430" font-family="Liberation Sans, sans-serif">
<rect x="270.5" y="883" width="175.5" height="278.5" fill="#ee7c1d"/>
<rect x="438" y="964" width="8" height="7" fill="#e06f14"/><rect x="410" y="1046" width="28" height="15" fill="#e4751a"/><path d="M420.700 975H437.900V970.600H446V1061H437.900V1055.700H420.700z" fill="#f8d97e" stroke="#b08a30" stroke-width="0.700"/>
<path d="M420.700 975V949H446M437.900 970.600V964H446" stroke="#222" stroke-width="0.800" fill="none"/>
<circle cx="430.200" cy="985.200" r="3.300" fill="#fff" stroke="#777" stroke-width="0.700"/><circle cx="430.200" cy="1046" r="3.300" fill="#fff" stroke="#777" stroke-width="0.700"/>
<path d="M420.700 1045.600H410V1061H437.900M430.800 1061V1078.600H446" stroke="#222" stroke-width="0.800" fill="none"/>
<path d="M446 1061H464.5M463.800 1061V1161.5M446 1161.5H464.5" stroke="#999" stroke-width="0.800" fill="none"/>
<text x="431.5" y="948" font-size="15.5" font-weight="bold">c</text><text x="437.5" y="962.5" font-size="15.5" font-weight="bold">a</text>
<text x="434" y="1078.300" font-size="15.5" font-weight="bold">d</text>
<text transform="translate(409.5 1059) rotate(-90)" font-size="15.5" font-weight="bold">b</text>
<text transform="translate(458 1116) rotate(-90)" font-size="15.5" font-weight="bold">y</text>
<defs><clipPath id="cc"><circle cx="520.5" cy="860.5" r="108.5"/></clipPath></defs>
<circle cx="520.5" cy="860.5" r="108.5" fill="#f4f4f4"/>
<g clip-path="url(#cc)"><rect x="511.5" y="745" width="33.5" height="230" fill="#f8d67a"/><path d="M540.5 752V969" stroke="#e0b44c" stroke-width="2"/></g>
<circle cx="520.5" cy="860.5" r="108.5" fill="none" stroke="#666" stroke-width="0.800"/>
<rect x="516" y="769.5" width="24.5" height="183" fill="#f4f4f4" stroke="#777" stroke-width="0.800"/>
<rect x="520.5" y="780.5" width="15" height="161" fill="#f4f4f4" stroke="#888" stroke-width="0.800"/>
<path d="M541 769.5H582.5M582 769.5V952.5M541 952.5H582.5M545 780.5H564.5M564 780.5V941.5M545 941.5H564.5M534 801H577M516 836.5H541M520 849H536" stroke="#666" stroke-width="0.700" fill="none"/>
<text x="567.5" y="800.5" font-size="15.5" font-weight="bold">o</text>
<text x="523.5" y="836" font-size="15" font-weight="bold">h</text><text x="526.200" y="848.5" font-size="13" font-weight="bold">i</text>
<text transform="translate(562.5 864) rotate(-90)" font-size="15" font-weight="bold">f</text>
<text transform="translate(578 866.5) rotate(-90)" font-size="16.5" font-weight="bold">g</text>
</svg>
<div class="lbl" style="left:577px;top:748.5px;width:260px">基准边</div>
<div class="rad" style="left:859.0px;top:755.0px"></div>
<div class="lbl" style="left:882.5px;top:748.5px;text-align:left">Y-面</div>
<div class="rad on" style="left:955.0px;top:755.0px"></div>
<div class="lbl" style="left:978.5px;top:748.5px;text-align:left">Y+面</div>
<div class="rad" style="left:1050.0px;top:755.0px"></div>
<div class="lbl" style="left:1073.5px;top:748.5px;text-align:left">X-面</div>
<div class="rad" style="left:1145.5px;top:755.0px"></div>
<div class="lbl" style="left:1169px;top:748.5px;text-align:left">X+面</div>
<div class="lbl" style="left:583px;top:797px;width:260px">方向</div>
<div class="rad on" style="left:859.0px;top:803.5px"></div>
<div class="lbl" style="left:882.5px;top:797px;text-align:left">-</div>
<div class="rad" style="left:953.5px;top:803.5px"></div>
<div class="lbl" style="left:977px;top:797px;text-align:left">+</div>
<div class="lbl" style="left:577px;top:844.5px;width:260px">边框形状</div>
<div class="rad on" style="left:859.0px;top:851.0px"></div>
<div class="lbl" style="left:882.5px;top:844.5px;text-align:left">矩形</div>
<div class="rad" style="left:955.0px;top:851.0px"></div>
<div class="lbl" style="left:978.5px;top:844.5px;text-align:left">圆形</div>
<div class="lbl" style="left:985px;top:844.5px;width:260px">外框长度(g)</div>
<div class="inp" style="left:1266px;top:844.0px">180.00</div>
<div class="mm" style="left:1411px;top:844.5px">mm</div>
<div class="lbl" style="left:577px;top:891.5px;width:260px">外框侧向下边距(y)</div>
<div class="inp" style="left:857px;top:891.0px">1200</div>
<div class="mm" style="left:1003px;top:891.5px">mm</div>
<div class="lbl" style="left:985px;top:891.5px;width:260px">外框宽度(h)</div>
<div class="inp" style="left:1266px;top:891.0px">16.00</div>
<div class="mm" style="left:1411px;top:891.5px">mm</div>
<div class="lbl" style="left:577px;top:939.5px;width:260px">外框Z向下边距(o)</div>
<div class="inp" style="left:857px;top:939.0px">0.00</div>
<div class="mm" style="left:1003px;top:939.5px">mm</div>
<div class="lbl" style="left:985px;top:939.5px;width:260px">外框深度(a)</div>
<div class="inp" style="left:1266px;top:939.0px">3.00</div>
<div class="mm" style="left:1411px;top:939.5px">mm</div>
<div class="lbl" style="left:577px;top:987px;width:260px">刀具号</div>
<div class="cmb" style="left:859px;top:985.5px"></div>
<div class="lbl" style="left:985px;top:987px;width:260px">清角刀</div>
<div class="cmb" style="left:1267px;top:985.5px"></div>
<div class="a" style="left:668px;top:1054px;width:793px;height:96px;border:1px solid #d2d2d2;border-radius:5px;box-shadow:inset 0 0 0 1px #fbfbfb"></div>
<div class="a" style="left:676px;top:1042px;width:88px;height:24px;background:#f4f4f4"></div>
<div class="t" style="left:679px;top:1044.5px;font-size:20.5px;color:#1c7ac4">内槽信息</div>
<div class="lbl" style="left:599px;top:1072.5px;width:260px">内槽宽度 (i)</div>
<div class="inp" style="left:879px;top:1072.0px">16.00</div>
<div class="mm" style="left:1025px;top:1072.5px">mm</div>
<div class="lbl" style="left:988px;top:1072.5px;width:260px">内槽长度 (f)</div>
<div class="inp" style="left:1268px;top:1072.0px">150.00</div>
<div class="mm" style="left:1414px;top:1072.5px">mm</div>
<div class="lbl" style="left:599px;top:1110.5px;width:260px">内槽深度(c)</div>
<div class="inp" style="left:879px;top:1110.0px">60.00</div>
<div class="mm" style="left:1025px;top:1110.5px">mm</div>
<div class="a" style="left:668px;top:1180px;width:793px;height:190px;border:1px solid #d2d2d2;border-radius:5px;box-shadow:inset 0 0 0 1px #fbfbfb"></div>
<div class="a" style="left:676px;top:1168px;width:68px;height:24px;background:#f4f4f4"></div>
<div class="t" style="left:679px;top:1170.5px;font-size:20.5px;color:#1c7ac4">孔信息</div>
<div class="lbl" style="left:626px;top:1200px;width:260px">孔的横向偏距(d)</div>
<div class="inp" style="left:906px;top:1199.5px">40.00</div>
<div class="mm" style="left:1052px;top:1200px">mm</div>
<div class="lbl" style="left:991px;top:1200px;width:260px">孔半径</div>
<div class="inp" style="left:1266px;top:1199.5px">8.00</div>
<div class="mm" style="left:1411px;top:1200px">mm</div>
<div class="lbl" style="left:626px;top:1240.5px;width:260px">孔到外框下边沿偏距(b)</div>
<div class="inp" style="left:906px;top:1240.0px">25.00</div>
<div class="mm" style="left:1052px;top:1240.5px">mm</div>
<div class="lbl" style="left:991px;top:1240.5px;width:260px">孔深</div>
<div class="inp" style="left:1266px;top:1240.0px">18.00</div>
<div class="mm" style="left:1411px;top:1240.5px">mm</div>
<div class="lbl" style="left:626px;top:1281.5px;width:260px">孔的个数</div>
<div class="inp" style="left:906px;top:1281.0px">1</div>
<div class="lbl" style="left:991px;top:1281.5px;width:260px">孔间距</div>
<div class="inp" style="left:1266px;top:1281.0px">60.00</div>
<div class="mm" style="left:1411px;top:1281.5px">mm</div>
<div class="lbl" style="left:626px;top:1326px;width:260px">刀具号</div>
<div class="cmb" style="left:907px;top:1324.5px"></div>
<div class="a" style="left:785px;top:1387px;width:18px;height:18px;border:1px solid #333;background:#fff"></div>
<div class="lbl" style="left:811px;top:1383px;text-align:left">不加工</div>
<div class="btn" style="left:1209px;top:1454px;width:106px;height:38px;font-size:19px;line-height:36px;border-radius:6px">确认</div>
<div class="btn" style="left:1342px;top:1454px;width:107px;height:38px;font-size:19px;line-height:36px;border-radius:6px">取消</div>
</body></html>
